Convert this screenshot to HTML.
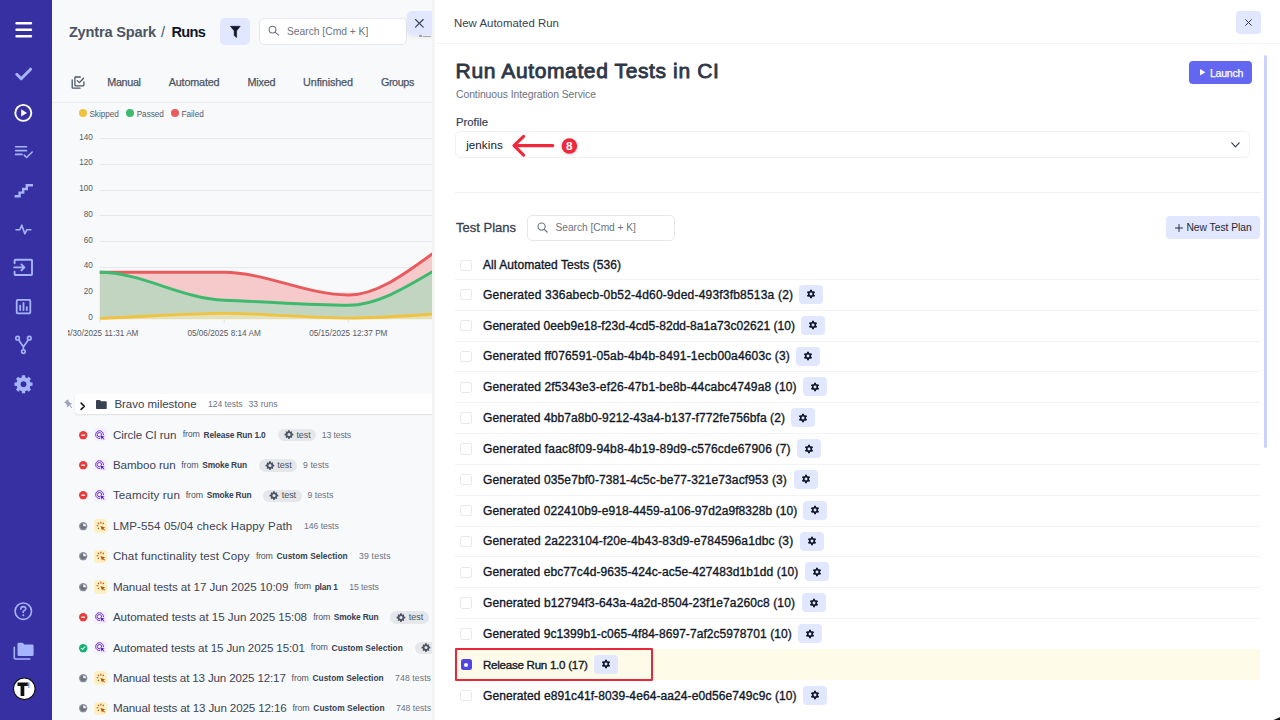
<!DOCTYPE html>
<html><head><meta charset="utf-8">
<style>
*{box-sizing:border-box;margin:0;padding:0}
html,body{width:1280px;height:720px;overflow:hidden;background:#f8f9fb;font-family:"Liberation Sans",sans-serif;position:relative}
.a{position:absolute}
.t{position:absolute;white-space:nowrap;line-height:1}
svg{position:absolute;overflow:visible}
</style></head><body>
<div class="a" style="left:0;top:0;width:432px;height:720px;overflow:hidden">
<div class="t" style="left:68.90px;top:24.96px;font-size:14.6px;color:#4b5563;font-weight:700;letter-spacing:-0.188px;">Zyntra Spark</div>
<div class="t" style="left:161.00px;top:24.96px;font-size:14.6px;color:#4b5563;">/</div>
<div class="t" style="left:171.50px;top:24.96px;font-size:14.6px;color:#111827;font-weight:700;letter-spacing:-0.725px;">Runs</div>
<div class="a" style="left:219.60px;top:18.20px;width:30.80px;height:26.40px;background:#e0e7ff;border-radius:5px"></div>
<svg style="left:229.5px;top:25.5px" width="11" height="12" viewBox="0 0 11 12"><path d="M0.4 0.3H10.2L6.6 4.8V11.5L4.2 9.6V4.8Z" fill="#111827" stroke="#111827" stroke-width="0.6" stroke-linejoin="round"/></svg>
<div class="a" style="left:258.90px;top:18.30px;width:147.80px;height:26.40px;background:#fff;border:1px solid #e6e8eb;border-radius:5px"></div>
<svg style="left:268.3px;top:25.3px" width="12" height="12" viewBox="0 0 12 12"><circle cx="4.5" cy="4.6" r="3.4" fill="none" stroke="#6b7280" stroke-width="1.1"/><path d="M7.4 7.4L10.6 10.2" stroke="#6b7280" stroke-width="1.1" stroke-linecap="round"/></svg>
<div class="t" style="left:287.00px;top:26.50px;font-size:10.3px;color:#6b7280;letter-spacing:-0.017px;">Search [Cmd + K]</div>
<svg style="left:71px;top:76px" width="14" height="14" viewBox="71 76 14 14"><g fill="none" stroke="#4b5563" stroke-width="1.3" stroke-linecap="round" stroke-linejoin="round"><path d="M80.3 77H75.6Q74.9 77 74.9 77.7V85.1Q74.9 85.8 75.6 85.8H83.2Q83.9 85.8 83.9 85.1V82"/><path d="M72.2 80V87.4Q72.2 88.2 73 88.2H80"/><path d="M77.3 80.6L79.4 82.6L83.5 78.3"/></g></svg>
<div class="t" style="left:107.30px;top:77.07px;font-size:10.8px;color:#4b5563;-webkit-text-stroke:0.25px #4b5563;letter-spacing:-0.354px;">Manual</div>
<div class="t" style="left:168.75px;top:77.07px;font-size:10.8px;color:#4b5563;-webkit-text-stroke:0.25px #4b5563;letter-spacing:-0.176px;">Automated</div>
<div class="t" style="left:247.60px;top:77.07px;font-size:10.8px;color:#4b5563;-webkit-text-stroke:0.25px #4b5563;letter-spacing:-0.222px;">Mixed</div>
<div class="t" style="left:303.10px;top:77.07px;font-size:10.8px;color:#4b5563;-webkit-text-stroke:0.25px #4b5563;letter-spacing:-0.133px;">Unfinished</div>
<div class="t" style="left:380.90px;top:77.07px;font-size:10.8px;color:#4b5563;-webkit-text-stroke:0.25px #4b5563;letter-spacing:-0.403px;">Groups</div>
<div class="a" style="left:52.00px;top:102.00px;width:380.00px;height:1.00px;background:#eceef1"></div>
<div class="a" style="left:78.90px;top:108.80px;width:8.40px;height:8.40px;background:#efc33f;border-radius:50%"></div>
<div class="t" style="left:89.40px;top:111.07px;font-size:8.2px;color:#555b63;letter-spacing:-0.019px;">Skipped</div>
<div class="a" style="left:126.10px;top:108.80px;width:8.40px;height:8.40px;background:#3dba6e;border-radius:50%"></div>
<div class="t" style="left:136.70px;top:111.07px;font-size:8.2px;color:#555b63;letter-spacing:-0.025px;">Passed</div>
<div class="a" style="left:171.00px;top:108.80px;width:8.40px;height:8.40px;background:#e95b5d;border-radius:50%"></div>
<div class="t" style="left:181.60px;top:111.07px;font-size:8.2px;color:#555b63;letter-spacing:-0.039px;">Failed</div>
<div class="a" style="left:99.80px;top:138.25px;width:340.00px;height:1.00px;background:#e6e7ea"></div>
<div class="t" style="left:92.80px;top:133.82px;font-size:8.2px;color:#555b63;transform:translateX(-100%);">140</div>
<div class="a" style="left:99.80px;top:163.90px;width:340.00px;height:1.00px;background:#e6e7ea"></div>
<div class="t" style="left:92.80px;top:159.47px;font-size:8.2px;color:#555b63;transform:translateX(-100%);">120</div>
<div class="a" style="left:99.80px;top:189.60px;width:340.00px;height:1.00px;background:#e6e7ea"></div>
<div class="t" style="left:92.80px;top:185.17px;font-size:8.2px;color:#555b63;transform:translateX(-100%);">100</div>
<div class="a" style="left:99.80px;top:215.30px;width:340.00px;height:1.00px;background:#e6e7ea"></div>
<div class="t" style="left:92.80px;top:210.87px;font-size:8.2px;color:#555b63;transform:translateX(-100%);">80</div>
<div class="a" style="left:99.80px;top:241.00px;width:340.00px;height:1.00px;background:#e6e7ea"></div>
<div class="t" style="left:92.80px;top:236.57px;font-size:8.2px;color:#555b63;transform:translateX(-100%);">60</div>
<div class="a" style="left:99.80px;top:266.70px;width:340.00px;height:1.00px;background:#e6e7ea"></div>
<div class="t" style="left:92.80px;top:262.27px;font-size:8.2px;color:#555b63;transform:translateX(-100%);">40</div>
<div class="a" style="left:99.80px;top:292.40px;width:340.00px;height:1.00px;background:#e6e7ea"></div>
<div class="t" style="left:92.80px;top:287.97px;font-size:8.2px;color:#555b63;transform:translateX(-100%);">20</div>
<div class="a" style="left:99.80px;top:318.10px;width:340.00px;height:1.00px;background:#e6e7ea"></div>
<div class="t" style="left:92.80px;top:313.67px;font-size:8.2px;color:#555b63;transform:translateX(-100%);">0</div>
<svg style="left:68px;top:100px;overflow:hidden" width="364" height="250" viewBox="68 100 364 250"><path d="M99.80 272.30C141.20 272.30 182.60 272.30 224.00 272.30C265.43 272.30 306.87 295.00 348.30 295.00C389.70 295.00 431.10 249.65 472.50 227.00L472.50 250.10C431.10 268.48 389.70 305.30 348.30 305.30C306.87 305.30 265.43 301.44 224.00 300.20C182.60 298.96 141.20 272.30 99.80 272.30Z" fill="#f6c9cb"/><path d="M99.80 272.30C141.20 272.30 182.60 298.96 224.00 300.20C265.43 301.44 306.87 305.30 348.30 305.30C389.70 305.30 431.10 268.48 472.50 250.10L472.50 311.60C431.10 313.75 389.70 318.10 348.30 318.10C306.87 318.10 265.43 313.30 224.00 313.30C182.60 313.30 141.20 317.06 99.80 318.30Z" fill="#c2d5c0"/><path d="M99.80 318.30C141.20 317.06 182.60 313.30 224.00 313.30C265.43 313.30 306.87 318.10 348.30 318.10C389.70 318.10 431.10 313.75 472.50 311.60L472.50 319.20C348.27 319.20 224.03 319.20 99.80 319.20Z" fill="#e4e1b8"/><path d="M99.80 272.30C141.20 272.30 182.60 272.30 224.00 272.30C265.43 272.30 306.87 295.00 348.30 295.00C389.70 295.00 431.10 249.65 472.50 227.00" fill="none" stroke="#e85a5c" stroke-width="2.9"/><path d="M99.80 272.30C141.20 272.30 182.60 298.96 224.00 300.20C265.43 301.44 306.87 305.30 348.30 305.30C389.70 305.30 431.10 268.48 472.50 250.10" fill="none" stroke="#3dba6e" stroke-width="2.9"/><path d="M99.80 318.30C141.20 317.06 182.60 313.30 224.00 313.30C265.43 313.30 306.87 318.10 348.30 318.10C389.70 318.10 431.10 313.75 472.50 311.60" fill="none" stroke="#efc33f" stroke-width="2.8"/><rect x="99.3" y="319.2" width="1" height="3.8" fill="#e3e4e7"/><rect x="223.7" y="319.2" width="1" height="3.8" fill="#e3e4e7"/><rect x="347.8" y="319.2" width="1" height="3.8" fill="#e3e4e7"/><g font-family="Liberation Sans" font-size="8.2" fill="#555b63" text-anchor="middle"><text x="99.8" y="335.6">04/30/2025 11:31 AM</text><text x="224.1" y="335.6">05/06/2025 8:14 AM</text><text x="348.3" y="335.6">05/15/2025 12:37 PM</text></g></svg>
<div class="a" style="left:431.80px;top:348.50px;width:3.10px;height:21.80px;background:#e3e5e9;border-radius:2px"></div>
<div class="a" style="left:75.20px;top:394.20px;width:360.00px;height:19.70px;background:#fff;border-radius:3px;box-shadow:0 1px 2px rgba(0,0,0,0.10)"></div>
<svg style="left:64px;top:398.5px" width="10" height="11" viewBox="0 0 10 11"><g transform="rotate(-40 5 5.5)" fill="#9aa3b2"><rect x="2.6" y="0.8" width="4.8" height="1.4" rx="0.4"/><path d="M3.4 2.1H6.6L6.9 5.2L8.2 6.6H1.8L3.1 5.2Z"/><rect x="4.55" y="6.5" width="0.9" height="3.6"/></g></svg>
<svg style="left:79.5px;top:401.5px" width="6" height="8" viewBox="0 0 6 8"><path d="M1.1 1.1L4.4 4.3L1.1 7.4" fill="none" stroke="#111" stroke-width="1.5" stroke-linecap="round" stroke-linejoin="round"/></svg>
<svg style="left:95.9px;top:399.5px" width="11" height="9.2" viewBox="0 0 12 10" preserveAspectRatio="none"><path d="M0 1Q0 0 1 0H4.2L5.5 1.4H11Q11.7 1.4 11.7 2.2V9Q11.7 9.8 11 9.8H0.8Q0 9.8 0 9Z" fill="#374151"/></svg>
<div class="t" style="left:114.40px;top:399.08px;font-size:11.5px;color:#374151;letter-spacing:-0.017px;">Bravo milestone</div>
<div class="t" style="left:207.90px;top:399.93px;font-size:8.6px;color:#6b7280;letter-spacing:-0.022px;">124 tests</div>
<div class="t" style="left:248.50px;top:399.93px;font-size:8.6px;color:#6b7280;letter-spacing:0.074px;">33 runs</div>
<svg style="left:78.67px;top:430.65px" width="8.4" height="8.4" viewBox="0 0 8.4 8.4"><circle cx="4.2" cy="4.2" r="4.15" fill="#ea3b3b"/><rect x="2.3" y="3.6" width="3.8" height="1.25" fill="#fff"/></svg>
<div class="a" style="left:94.20px;top:428.25px;width:12.40px;height:12.80px;background:#f4f0ff;border-radius:3px"></div>
<svg style="left:95.2px;top:429.55px" width="11" height="11" viewBox="0 0 12 12"><g fill="none" stroke="#6d28d9" stroke-width="1.05" stroke-linecap="round"><path d="M9.3 5.2A4.3 4.3 0 1 0 5.2 9.4"/><path d="M7.3 5.4A2.4 2.4 0 1 0 5.1 7.5"/></g><path d="M5.6 5.6L10.6 7.3L8.6 8.1L10.4 9.9L9.8 10.5L8 8.7L7.3 10.6Z" fill="#5b21b6"/></svg>
<div class="t" style="left:112.90px;top:428.65px;font-size:11.6px;color:#3b4453;letter-spacing:-0.074px;">Circle CI run</div>
<div class="t" style="left:182.70px;top:430.31px;font-size:8.8px;color:#4b5563;letter-spacing:-0.125px;">from</div>
<div class="t" style="left:203.60px;top:430.65px;font-size:8.4px;color:#374151;font-weight:700;letter-spacing:-0.149px;">Release Run 1.0</div>
<div class="a" style="left:277.80px;top:428.85px;width:38.20px;height:12.60px;background:#e5e7eb;border-radius:7px"></div>
<svg style="left:283.80px;top:430.25px" width="10" height="10" viewBox="0 0 9 10"><path d="M4.5 0.2L5.4 0.4L5.6 1.5L6.4 1.9L7.4 1.4L8.1 2.1L7.6 3.1L8 3.9L9.1 4.1L9.3 5L9.1 5.9L8 6.1L7.6 6.9L8.1 7.9L7.4 8.6L6.4 8.1L5.6 8.5L5.4 9.6L4.5 9.8L3.6 9.6L3.4 8.5L2.6 8.1L1.6 8.6L0.9 7.9L1.4 6.9L1 6.1L-0.1 5.9L-0.3 5L-0.1 4.1L1 3.9L1.4 3.1L0.9 2.1L1.6 1.4L2.6 1.9L3.4 1.5L3.6 0.4Z" fill="#4b5563" transform="translate(0.3 0) scale(0.92)"/><circle cx="4.5" cy="4.6" r="1.5" fill="#e5e7eb"/></svg>
<div class="t" style="left:296.40px;top:430.55px;font-size:9.0px;color:#4b5563;letter-spacing:-0.027px;">test</div>
<div class="t" style="left:321.80px;top:430.60px;font-size:8.7px;color:#6b7280;letter-spacing:-0.146px;">13 tests</div>
<svg style="left:78.67px;top:461.07px" width="8.4" height="8.4" viewBox="0 0 8.4 8.4"><circle cx="4.2" cy="4.2" r="4.15" fill="#ea3b3b"/><rect x="2.3" y="3.6" width="3.8" height="1.25" fill="#fff"/></svg>
<div class="a" style="left:94.20px;top:458.67px;width:12.40px;height:12.80px;background:#f4f0ff;border-radius:3px"></div>
<svg style="left:95.2px;top:459.97px" width="11" height="11" viewBox="0 0 12 12"><g fill="none" stroke="#6d28d9" stroke-width="1.05" stroke-linecap="round"><path d="M9.3 5.2A4.3 4.3 0 1 0 5.2 9.4"/><path d="M7.3 5.4A2.4 2.4 0 1 0 5.1 7.5"/></g><path d="M5.6 5.6L10.6 7.3L8.6 8.1L10.4 9.9L9.8 10.5L8 8.7L7.3 10.6Z" fill="#5b21b6"/></svg>
<div class="t" style="left:112.90px;top:459.07px;font-size:11.6px;color:#3b4453;letter-spacing:-0.049px;">Bamboo run</div>
<div class="t" style="left:181.30px;top:460.73px;font-size:8.8px;color:#4b5563;letter-spacing:-0.125px;">from</div>
<div class="t" style="left:202.20px;top:461.07px;font-size:8.4px;color:#374151;font-weight:700;letter-spacing:-0.145px;">Smoke Run</div>
<div class="a" style="left:258.70px;top:459.27px;width:38.20px;height:12.60px;background:#e5e7eb;border-radius:7px"></div>
<svg style="left:264.70px;top:460.67px" width="10" height="10" viewBox="0 0 9 10"><path d="M4.5 0.2L5.4 0.4L5.6 1.5L6.4 1.9L7.4 1.4L8.1 2.1L7.6 3.1L8 3.9L9.1 4.1L9.3 5L9.1 5.9L8 6.1L7.6 6.9L8.1 7.9L7.4 8.6L6.4 8.1L5.6 8.5L5.4 9.6L4.5 9.8L3.6 9.6L3.4 8.5L2.6 8.1L1.6 8.6L0.9 7.9L1.4 6.9L1 6.1L-0.1 5.9L-0.3 5L-0.1 4.1L1 3.9L1.4 3.1L0.9 2.1L1.6 1.4L2.6 1.9L3.4 1.5L3.6 0.4Z" fill="#4b5563" transform="translate(0.3 0) scale(0.92)"/><circle cx="4.5" cy="4.6" r="1.5" fill="#e5e7eb"/></svg>
<div class="t" style="left:277.30px;top:460.97px;font-size:9.0px;color:#4b5563;letter-spacing:-0.027px;">test</div>
<div class="t" style="left:303.10px;top:461.02px;font-size:8.7px;color:#6b7280;letter-spacing:0.024px;">9 tests</div>
<svg style="left:78.67px;top:491.49px" width="8.4" height="8.4" viewBox="0 0 8.4 8.4"><circle cx="4.2" cy="4.2" r="4.15" fill="#ea3b3b"/><rect x="2.3" y="3.6" width="3.8" height="1.25" fill="#fff"/></svg>
<div class="a" style="left:94.20px;top:489.09px;width:12.40px;height:12.80px;background:#f4f0ff;border-radius:3px"></div>
<svg style="left:95.2px;top:490.39px" width="11" height="11" viewBox="0 0 12 12"><g fill="none" stroke="#6d28d9" stroke-width="1.05" stroke-linecap="round"><path d="M9.3 5.2A4.3 4.3 0 1 0 5.2 9.4"/><path d="M7.3 5.4A2.4 2.4 0 1 0 5.1 7.5"/></g><path d="M5.6 5.6L10.6 7.3L8.6 8.1L10.4 9.9L9.8 10.5L8 8.7L7.3 10.6Z" fill="#5b21b6"/></svg>
<div class="t" style="left:112.90px;top:489.49px;font-size:11.6px;color:#3b4453;letter-spacing:0.112px;">Teamcity run</div>
<div class="t" style="left:185.80px;top:491.15px;font-size:8.8px;color:#4b5563;letter-spacing:-0.125px;">from</div>
<div class="t" style="left:206.70px;top:491.49px;font-size:8.4px;color:#374151;font-weight:700;letter-spacing:-0.145px;">Smoke Run</div>
<div class="a" style="left:263.10px;top:489.69px;width:38.70px;height:12.60px;background:#e5e7eb;border-radius:7px"></div>
<svg style="left:269.10px;top:491.09px" width="10" height="10" viewBox="0 0 9 10"><path d="M4.5 0.2L5.4 0.4L5.6 1.5L6.4 1.9L7.4 1.4L8.1 2.1L7.6 3.1L8 3.9L9.1 4.1L9.3 5L9.1 5.9L8 6.1L7.6 6.9L8.1 7.9L7.4 8.6L6.4 8.1L5.6 8.5L5.4 9.6L4.5 9.8L3.6 9.6L3.4 8.5L2.6 8.1L1.6 8.6L0.9 7.9L1.4 6.9L1 6.1L-0.1 5.9L-0.3 5L-0.1 4.1L1 3.9L1.4 3.1L0.9 2.1L1.6 1.4L2.6 1.9L3.4 1.5L3.6 0.4Z" fill="#4b5563" transform="translate(0.3 0) scale(0.92)"/><circle cx="4.5" cy="4.6" r="1.5" fill="#e5e7eb"/></svg>
<div class="t" style="left:281.70px;top:491.38px;font-size:9.0px;color:#4b5563;letter-spacing:-0.027px;">test</div>
<div class="t" style="left:307.60px;top:491.44px;font-size:8.7px;color:#6b7280;letter-spacing:0.010px;">9 tests</div>
<svg style="left:78.67px;top:521.91px" width="8.4" height="8.4" viewBox="0 0 8.4 8.4"><circle cx="4.2" cy="4.2" r="4.15" fill="#8c939d"/><circle cx="4.2" cy="4.2" r="2.8" fill="#6a717c"/><path d="M4.2 4.2V1.4A2.8 2.8 0 0 1 7.0 4.2Z" fill="#f4f5f7"/></svg>
<div class="a" style="left:93.60px;top:519.31px;width:13.40px;height:13.60px;background:#fdf0c4;border-radius:3.5px"></div>
<svg style="left:93.6px;top:519.51px" width="12" height="12" viewBox="0 0 12 12"><g stroke="#b45309" stroke-width="1.05" stroke-linecap="round"><path d="M6.9 2.1V3.2"/><path d="M4.1 3.1L4.7 3.8"/><path d="M9.6 3.1L9.0 3.8"/><path d="M3.0 5.8H4.0"/><path d="M4.2 8.6L4.8 8.0"/></g><path d="M6.5 5.9L11.3 7.6L9.4 8.3L11.1 10.0L10.5 10.6L8.8 8.9L8.1 10.8Z" fill="#b45309"/></svg>
<div class="t" style="left:112.90px;top:519.91px;font-size:11.6px;color:#3b4453;letter-spacing:0.094px;">LMP-554 05/04 check Happy Path</div>
<div class="t" style="left:304.00px;top:521.86px;font-size:8.7px;color:#6b7280;letter-spacing:-0.067px;">146 tests</div>
<svg style="left:78.67px;top:552.33px" width="8.4" height="8.4" viewBox="0 0 8.4 8.4"><circle cx="4.2" cy="4.2" r="4.15" fill="#8c939d"/><circle cx="4.2" cy="4.2" r="2.8" fill="#6a717c"/><path d="M4.2 4.2V1.4A2.8 2.8 0 0 1 7.0 4.2Z" fill="#f4f5f7"/></svg>
<div class="a" style="left:93.60px;top:549.73px;width:13.40px;height:13.60px;background:#fdf0c4;border-radius:3.5px"></div>
<svg style="left:93.6px;top:549.93px" width="12" height="12" viewBox="0 0 12 12"><g stroke="#b45309" stroke-width="1.05" stroke-linecap="round"><path d="M6.9 2.1V3.2"/><path d="M4.1 3.1L4.7 3.8"/><path d="M9.6 3.1L9.0 3.8"/><path d="M3.0 5.8H4.0"/><path d="M4.2 8.6L4.8 8.0"/></g><path d="M6.5 5.9L11.3 7.6L9.4 8.3L11.1 10.0L10.5 10.6L8.8 8.9L8.1 10.8Z" fill="#b45309"/></svg>
<div class="t" style="left:112.90px;top:550.33px;font-size:11.6px;color:#3b4453;letter-spacing:0.079px;">Chat functinality test Copy</div>
<div class="t" style="left:256.00px;top:551.99px;font-size:8.8px;color:#4b5563;letter-spacing:-0.250px;">from</div>
<div class="t" style="left:276.40px;top:552.33px;font-size:8.4px;color:#374151;font-weight:700;letter-spacing:0.041px;">Custom Selection</div>
<div class="t" style="left:359.10px;top:552.28px;font-size:8.7px;color:#6b7280;letter-spacing:0.142px;">39 tests</div>
<svg style="left:78.67px;top:582.75px" width="8.4" height="8.4" viewBox="0 0 8.4 8.4"><circle cx="4.2" cy="4.2" r="4.15" fill="#8c939d"/><circle cx="4.2" cy="4.2" r="2.8" fill="#6a717c"/><path d="M4.2 4.2V1.4A2.8 2.8 0 0 1 7.0 4.2Z" fill="#f4f5f7"/></svg>
<div class="a" style="left:93.60px;top:580.15px;width:13.40px;height:13.60px;background:#fdf0c4;border-radius:3.5px"></div>
<svg style="left:93.6px;top:580.35px" width="12" height="12" viewBox="0 0 12 12"><g stroke="#b45309" stroke-width="1.05" stroke-linecap="round"><path d="M6.9 2.1V3.2"/><path d="M4.1 3.1L4.7 3.8"/><path d="M9.6 3.1L9.0 3.8"/><path d="M3.0 5.8H4.0"/><path d="M4.2 8.6L4.8 8.0"/></g><path d="M6.5 5.9L11.3 7.6L9.4 8.3L11.1 10.0L10.5 10.6L8.8 8.9L8.1 10.8Z" fill="#b45309"/></svg>
<div class="t" style="left:112.90px;top:580.75px;font-size:11.6px;color:#3b4453;letter-spacing:-0.076px;">Manual tests at 17 Jun 2025 10:09</div>
<div class="t" style="left:294.20px;top:582.41px;font-size:8.8px;color:#4b5563;letter-spacing:-0.225px;">from</div>
<div class="t" style="left:314.70px;top:582.75px;font-size:8.4px;color:#374151;font-weight:700;letter-spacing:-0.196px;">plan 1</div>
<div class="t" style="left:349.30px;top:582.70px;font-size:8.7px;color:#6b7280;letter-spacing:-0.133px;">15 tests</div>
<svg style="left:78.67px;top:613.17px" width="8.4" height="8.4" viewBox="0 0 8.4 8.4"><circle cx="4.2" cy="4.2" r="4.15" fill="#ea3b3b"/><rect x="2.3" y="3.6" width="3.8" height="1.25" fill="#fff"/></svg>
<div class="a" style="left:94.20px;top:610.77px;width:12.40px;height:12.80px;background:#f4f0ff;border-radius:3px"></div>
<svg style="left:95.2px;top:612.07px" width="11" height="11" viewBox="0 0 12 12"><g fill="none" stroke="#6d28d9" stroke-width="1.05" stroke-linecap="round"><path d="M9.3 5.2A4.3 4.3 0 1 0 5.2 9.4"/><path d="M7.3 5.4A2.4 2.4 0 1 0 5.1 7.5"/></g><path d="M5.6 5.6L10.6 7.3L8.6 8.1L10.4 9.9L9.8 10.5L8 8.7L7.3 10.6Z" fill="#5b21b6"/></svg>
<div class="t" style="left:112.90px;top:611.17px;font-size:11.6px;color:#3b4453;letter-spacing:-0.051px;">Automated tests at 15 Jun 2025 15:08</div>
<div class="t" style="left:313.30px;top:612.83px;font-size:8.8px;color:#4b5563;letter-spacing:-0.225px;">from</div>
<div class="t" style="left:333.80px;top:613.17px;font-size:8.4px;color:#374151;font-weight:700;letter-spacing:-0.145px;">Smoke Run</div>
<div class="a" style="left:390.20px;top:611.37px;width:38.70px;height:12.60px;background:#e5e7eb;border-radius:7px"></div>
<svg style="left:396.20px;top:612.77px" width="10" height="10" viewBox="0 0 9 10"><path d="M4.5 0.2L5.4 0.4L5.6 1.5L6.4 1.9L7.4 1.4L8.1 2.1L7.6 3.1L8 3.9L9.1 4.1L9.3 5L9.1 5.9L8 6.1L7.6 6.9L8.1 7.9L7.4 8.6L6.4 8.1L5.6 8.5L5.4 9.6L4.5 9.8L3.6 9.6L3.4 8.5L2.6 8.1L1.6 8.6L0.9 7.9L1.4 6.9L1 6.1L-0.1 5.9L-0.3 5L-0.1 4.1L1 3.9L1.4 3.1L0.9 2.1L1.6 1.4L2.6 1.9L3.4 1.5L3.6 0.4Z" fill="#4b5563" transform="translate(0.3 0) scale(0.92)"/><circle cx="4.5" cy="4.6" r="1.5" fill="#e5e7eb"/></svg>
<div class="t" style="left:408.80px;top:613.07px;font-size:9.0px;color:#4b5563;letter-spacing:-0.027px;">test</div>
<svg style="left:78.67px;top:643.59px" width="8.4" height="8.4" viewBox="0 0 8.4 8.4"><circle cx="4.2" cy="4.2" r="4.15" fill="#10b06f"/><path d="M2.3 4.4L3.5 5.4L6 2.9" fill="none" stroke="#fff" stroke-width="1.1" stroke-linecap="round" stroke-linejoin="round"/></svg>
<div class="a" style="left:94.20px;top:641.19px;width:12.40px;height:12.80px;background:#f4f0ff;border-radius:3px"></div>
<svg style="left:95.2px;top:642.49px" width="11" height="11" viewBox="0 0 12 12"><g fill="none" stroke="#6d28d9" stroke-width="1.05" stroke-linecap="round"><path d="M9.3 5.2A4.3 4.3 0 1 0 5.2 9.4"/><path d="M7.3 5.4A2.4 2.4 0 1 0 5.1 7.5"/></g><path d="M5.6 5.6L10.6 7.3L8.6 8.1L10.4 9.9L9.8 10.5L8 8.7L7.3 10.6Z" fill="#5b21b6"/></svg>
<div class="t" style="left:112.90px;top:641.59px;font-size:11.6px;color:#3b4453;letter-spacing:-0.113px;">Automated tests at 15 Jun 2025 15:01</div>
<div class="t" style="left:310.70px;top:643.25px;font-size:8.8px;color:#4b5563;letter-spacing:-0.125px;">from</div>
<div class="t" style="left:331.60px;top:643.59px;font-size:8.4px;color:#374151;font-weight:700;letter-spacing:0.035px;">Custom Selection</div>
<div class="a" style="left:414.50px;top:641.79px;width:38.50px;height:12.60px;background:#e5e7eb;border-radius:7px"></div>
<svg style="left:420.50px;top:643.19px" width="10" height="10" viewBox="0 0 9 10"><path d="M4.5 0.2L5.4 0.4L5.6 1.5L6.4 1.9L7.4 1.4L8.1 2.1L7.6 3.1L8 3.9L9.1 4.1L9.3 5L9.1 5.9L8 6.1L7.6 6.9L8.1 7.9L7.4 8.6L6.4 8.1L5.6 8.5L5.4 9.6L4.5 9.8L3.6 9.6L3.4 8.5L2.6 8.1L1.6 8.6L0.9 7.9L1.4 6.9L1 6.1L-0.1 5.9L-0.3 5L-0.1 4.1L1 3.9L1.4 3.1L0.9 2.1L1.6 1.4L2.6 1.9L3.4 1.5L3.6 0.4Z" fill="#4b5563" transform="translate(0.3 0) scale(0.92)"/><circle cx="4.5" cy="4.6" r="1.5" fill="#e5e7eb"/></svg>
<div class="t" style="left:433.10px;top:643.49px;font-size:9.0px;color:#4b5563;letter-spacing:-0.027px;">test</div>
<svg style="left:78.67px;top:674.01px" width="8.4" height="8.4" viewBox="0 0 8.4 8.4"><circle cx="4.2" cy="4.2" r="4.15" fill="#8c939d"/><circle cx="4.2" cy="4.2" r="2.8" fill="#6a717c"/><path d="M4.2 4.2V1.4A2.8 2.8 0 0 1 7.0 4.2Z" fill="#f4f5f7"/></svg>
<div class="a" style="left:93.60px;top:671.41px;width:13.40px;height:13.60px;background:#fdf0c4;border-radius:3.5px"></div>
<svg style="left:93.6px;top:671.61px" width="12" height="12" viewBox="0 0 12 12"><g stroke="#b45309" stroke-width="1.05" stroke-linecap="round"><path d="M6.9 2.1V3.2"/><path d="M4.1 3.1L4.7 3.8"/><path d="M9.6 3.1L9.0 3.8"/><path d="M3.0 5.8H4.0"/><path d="M4.2 8.6L4.8 8.0"/></g><path d="M6.5 5.9L11.3 7.6L9.4 8.3L11.1 10.0L10.5 10.6L8.8 8.9L8.1 10.8Z" fill="#b45309"/></svg>
<div class="t" style="left:112.90px;top:672.01px;font-size:11.6px;color:#3b4453;letter-spacing:-0.154px;">Manual tests at 13 Jun 2025 12:17</div>
<div class="t" style="left:291.60px;top:673.67px;font-size:8.8px;color:#4b5563;letter-spacing:-0.150px;">from</div>
<div class="t" style="left:312.40px;top:674.01px;font-size:8.4px;color:#374151;font-weight:700;letter-spacing:0.041px;">Custom Selection</div>
<div class="t" style="left:395.10px;top:673.96px;font-size:8.7px;color:#6b7280;letter-spacing:0.077px;">748 tests</div>
<svg style="left:78.67px;top:704.43px" width="8.4" height="8.4" viewBox="0 0 8.4 8.4"><circle cx="4.2" cy="4.2" r="4.15" fill="#8c939d"/><circle cx="4.2" cy="4.2" r="2.8" fill="#6a717c"/><path d="M4.2 4.2V1.4A2.8 2.8 0 0 1 7.0 4.2Z" fill="#f4f5f7"/></svg>
<div class="a" style="left:93.60px;top:701.83px;width:13.40px;height:13.60px;background:#fdf0c4;border-radius:3.5px"></div>
<svg style="left:93.6px;top:702.03px" width="12" height="12" viewBox="0 0 12 12"><g stroke="#b45309" stroke-width="1.05" stroke-linecap="round"><path d="M6.9 2.1V3.2"/><path d="M4.1 3.1L4.7 3.8"/><path d="M9.6 3.1L9.0 3.8"/><path d="M3.0 5.8H4.0"/><path d="M4.2 8.6L4.8 8.0"/></g><path d="M6.5 5.9L11.3 7.6L9.4 8.3L11.1 10.0L10.5 10.6L8.8 8.9L8.1 10.8Z" fill="#b45309"/></svg>
<div class="t" style="left:112.90px;top:702.43px;font-size:11.6px;color:#3b4453;letter-spacing:-0.127px;">Manual tests at 13 Jun 2025 12:16</div>
<div class="t" style="left:292.40px;top:704.09px;font-size:8.8px;color:#4b5563;letter-spacing:-0.125px;">from</div>
<div class="t" style="left:313.30px;top:704.43px;font-size:8.4px;color:#374151;font-weight:700;letter-spacing:0.041px;">Custom Selection</div>
<div class="t" style="left:396.00px;top:704.38px;font-size:8.7px;color:#6b7280;letter-spacing:-0.023px;">748 tests</div>
</div>
<div class="a" style="left:407.00px;top:10.50px;width:25.00px;height:24.50px;background:#e0e7ff;border-radius:5px 0 0 5px;box-shadow:0 3px 4px rgba(0,0,0,0.06)"></div>
<svg style="left:414.7px;top:18.8px" width="9" height="9" viewBox="0 0 9 9"><path d="M0.5 0.5L8.2 8.2M8.2 0.5L0.5 8.2" stroke="#374151" stroke-width="1.15" stroke-linecap="round"/></svg>
<div class="a" style="left:418.50px;top:35.30px;width:3.00px;height:1.60px;background:#6b7280;opacity:0.6"></div>
<div class="a" style="left:422.50px;top:35.80px;width:8.00px;height:1.40px;background:#6b7280;opacity:0.55"></div>
<div class="a" style="left:432.00px;top:0.00px;width:3.00px;height:720.00px;background:linear-gradient(90deg,#f1f2f4,#f6f6f7)"></div>
<div class="a" style="left:434.50px;top:0.00px;width:845.50px;height:720.00px;background:#fff"></div>
<div class="t" style="left:454.00px;top:18.07px;font-size:11.4px;color:#374151;letter-spacing:0.026px;">New Automated Run</div>
<div class="a" style="left:434.50px;top:43.00px;width:845.50px;height:1.00px;background:#f3f4f6"></div>
<div class="a" style="left:1236.00px;top:11.40px;width:25.00px;height:23.00px;background:#e0e7ff;border-radius:4px"></div>
<svg style="left:1245px;top:19.4px" width="7" height="7" viewBox="0 0 7 7"><path d="M0.6 0.6L6.4 6.4M6.4 0.6L0.6 6.4" stroke="#374151" stroke-width="1" stroke-linecap="round"/></svg>
<div class="t" style="left:455.60px;top:60.35px;font-size:21px;color:#2d3748;-webkit-text-stroke:0.85px #2d3748;letter-spacing:0.622px;">Run Automated Tests in CI</div>
<div class="t" style="left:456.00px;top:89.71px;font-size:10.4px;color:#6b7280;letter-spacing:-0.074px;">Continuous Integration Service</div>
<div class="a" style="left:1189.00px;top:60.80px;width:63.20px;height:23.20px;background:#6366f1;border-radius:4px"></div>
<svg style="left:1199.8px;top:69.2px" width="5.4" height="6.6" viewBox="0 0 6 8" preserveAspectRatio="none"><path d="M0 0L6 4L0 8Z" fill="#fff"/></svg>
<div class="t" style="left:1210.00px;top:68.04px;font-size:10.6px;color:#fff;-webkit-text-stroke:0.25px #fff;letter-spacing:-0.296px;">Launch</div>
<div class="t" style="left:456.00px;top:116.65px;font-size:11.3px;color:#374151;-webkit-text-stroke:0.2px #374151;letter-spacing:-0.004px;">Profile</div>
<div class="a" style="left:455.00px;top:130.50px;width:795.00px;height:27.80px;border:1px solid #f0f1f3;border-radius:5px;background:#fff"></div>
<div class="t" style="left:466.20px;top:138.80px;font-size:11.6px;color:#111827;letter-spacing:0.070px;">jenkins</div>
<svg style="left:1230.8px;top:141.7px" width="9" height="6" viewBox="0 0 9 6"><path d="M0.8 0.8L4.5 4.8L8.2 0.8" fill="none" stroke="#374151" stroke-width="1.2" stroke-linecap="round" stroke-linejoin="round"/></svg>
<svg style="left:510px;top:133px" width="70" height="26" viewBox="0 0 70 26"><g fill="none" stroke="#f0283c" stroke-width="3.1" stroke-linecap="round" stroke-linejoin="round"><path d="M4.5 12.6H42.8"/><path d="M13.6 3.4L4 12.6L13.6 22.1"/></g><circle cx="59.4" cy="13.0" r="7.75" fill="#f0283c" style="filter:drop-shadow(0 1px 1.5px rgba(0,0,0,0.18))"/><text x="59.4" y="17.2" text-anchor="middle" font-family="Liberation Sans" font-weight="700" font-size="11.8" fill="#fff">8</text></svg>
<div class="a" style="left:455.00px;top:192.00px;width:806.00px;height:1.00px;background:#f1f2f4"></div>
<div class="t" style="left:456.00px;top:220.62px;font-size:13px;color:#374151;-webkit-text-stroke:0.3px #374151;letter-spacing:0.003px;">Test Plans</div>
<div class="a" style="left:527.40px;top:214.50px;width:148.10px;height:26.00px;border:1px solid #e5e7eb;border-radius:5px;background:#fff"></div>
<svg style="left:536.5px;top:222px" width="11" height="11" viewBox="0 0 11 11"><circle cx="4.6" cy="4.6" r="3.6" fill="none" stroke="#6b7280" stroke-width="1.1"/><path d="M7.3 7.3L10 10" stroke="#6b7280" stroke-width="1.2" stroke-linecap="round"/></svg>
<div class="t" style="left:555.50px;top:222.78px;font-size:10.2px;color:#6b7280;letter-spacing:-0.018px;">Search [Cmd + K]</div>
<div class="a" style="left:1165.50px;top:216.00px;width:94.80px;height:23.00px;background:#e0e7ff;border-radius:4px"></div>
<svg style="left:1175px;top:223.5px" width="8" height="8" viewBox="0 0 8 8"><path d="M4 0.5V7.5M0.5 4H7.5" stroke="#1f2937" stroke-width="0.95" stroke-linecap="round"/></svg>
<div class="t" style="left:1186.40px;top:222.50px;font-size:10.3px;color:#1f2937;letter-spacing:-0.027px;">New Test Plan</div>
<div class="a" style="left:1263.50px;top:55.00px;width:3.20px;height:393.00px;background:#c9d3fd;border-radius:2px"></div>
<div class="a" style="left:455.00px;top:279.00px;width:805.00px;height:1.00px;background:#f2f3f5"></div>
<div class="a" style="left:460.40px;top:259.67px;width:11.40px;height:11.40px;border:1px solid #e5e7eb;border-radius:2.5px;background:#fff"></div>
<div class="t" style="left:483.00px;top:259.33px;font-size:12px;color:#111827;-webkit-text-stroke:0.35px #111827;letter-spacing:0.059px;">All Automated Tests (536)</div>
<div class="a" style="left:455.00px;top:309.73px;width:805.00px;height:1.00px;background:#f2f3f5"></div>
<div class="a" style="left:460.40px;top:289.10px;width:11.40px;height:11.40px;border:1px solid #e5e7eb;border-radius:2.5px;background:#fff"></div>
<div class="t" style="left:483.00px;top:288.76px;font-size:12px;color:#111827;-webkit-text-stroke:0.35px #111827;letter-spacing:0.201px;">Generated 336abecb-0b52-4d60-9ded-493f3fb8513a (2)</div>
<div class="a" style="left:799.30px;top:284.90px;width:24.00px;height:19.00px;background:#e0e7ff;border-radius:4px"></div>
<svg style="left:807.30px;top:290.40px" width="8" height="8" viewBox="0 0 8 8"><path d="M3.01 1.27L3.04 -0.14L4.96 -0.14L4.99 1.27L5.86 1.78L7.11 1.10L8.06 2.76L6.86 3.50L6.86 4.50L8.06 5.24L7.11 6.90L5.86 6.22L4.99 6.73L4.96 8.14L3.04 8.14L3.01 6.73L2.14 6.22L0.89 6.90L-0.06 5.24L1.14 4.50L1.14 3.50L-0.06 2.76L0.89 1.10L2.14 1.78Z" fill="#0f172a"/><circle cx="4" cy="4" r="2.95" fill="#0f172a"/><circle cx="4" cy="4" r="1.45" fill="#e0e7ff"/></svg>
<div class="a" style="left:455.00px;top:340.56px;width:805.00px;height:1.00px;background:#f2f3f5"></div>
<div class="a" style="left:460.40px;top:319.93px;width:11.40px;height:11.40px;border:1px solid #e5e7eb;border-radius:2.5px;background:#fff"></div>
<div class="t" style="left:483.00px;top:319.59px;font-size:12px;color:#111827;-webkit-text-stroke:0.35px #111827;letter-spacing:0.048px;">Generated 0eeb9e18-f23d-4cd5-82dd-8a1a73c02621 (10)</div>
<div class="a" style="left:801.00px;top:315.73px;width:24.00px;height:19.00px;background:#e0e7ff;border-radius:4px"></div>
<svg style="left:809.00px;top:321.23px" width="8" height="8" viewBox="0 0 8 8"><path d="M3.01 1.27L3.04 -0.14L4.96 -0.14L4.99 1.27L5.86 1.78L7.11 1.10L8.06 2.76L6.86 3.50L6.86 4.50L8.06 5.24L7.11 6.90L5.86 6.22L4.99 6.73L4.96 8.14L3.04 8.14L3.01 6.73L2.14 6.22L0.89 6.90L-0.06 5.24L1.14 4.50L1.14 3.50L-0.06 2.76L0.89 1.10L2.14 1.78Z" fill="#0f172a"/><circle cx="4" cy="4" r="2.95" fill="#0f172a"/><circle cx="4" cy="4" r="1.45" fill="#e0e7ff"/></svg>
<div class="a" style="left:455.00px;top:371.39px;width:805.00px;height:1.00px;background:#f2f3f5"></div>
<div class="a" style="left:460.40px;top:350.76px;width:11.40px;height:11.40px;border:1px solid #e5e7eb;border-radius:2.5px;background:#fff"></div>
<div class="t" style="left:483.00px;top:350.42px;font-size:12px;color:#111827;-webkit-text-stroke:0.35px #111827;letter-spacing:0.153px;">Generated ff076591-05ab-4b4b-8491-1ecb00a4603c (3)</div>
<div class="a" style="left:796.00px;top:346.56px;width:24.00px;height:19.00px;background:#e0e7ff;border-radius:4px"></div>
<svg style="left:804.00px;top:352.06px" width="8" height="8" viewBox="0 0 8 8"><path d="M3.01 1.27L3.04 -0.14L4.96 -0.14L4.99 1.27L5.86 1.78L7.11 1.10L8.06 2.76L6.86 3.50L6.86 4.50L8.06 5.24L7.11 6.90L5.86 6.22L4.99 6.73L4.96 8.14L3.04 8.14L3.01 6.73L2.14 6.22L0.89 6.90L-0.06 5.24L1.14 4.50L1.14 3.50L-0.06 2.76L0.89 1.10L2.14 1.78Z" fill="#0f172a"/><circle cx="4" cy="4" r="2.95" fill="#0f172a"/><circle cx="4" cy="4" r="1.45" fill="#e0e7ff"/></svg>
<div class="a" style="left:455.00px;top:402.22px;width:805.00px;height:1.00px;background:#f2f3f5"></div>
<div class="a" style="left:460.40px;top:381.59px;width:11.40px;height:11.40px;border:1px solid #e5e7eb;border-radius:2.5px;background:#fff"></div>
<div class="t" style="left:483.00px;top:381.25px;font-size:12px;color:#111827;-webkit-text-stroke:0.35px #111827;letter-spacing:0.146px;">Generated 2f5343e3-ef26-47b1-be8b-44cabc4749a8 (10)</div>
<div class="a" style="left:802.70px;top:377.39px;width:24.00px;height:19.00px;background:#e0e7ff;border-radius:4px"></div>
<svg style="left:810.70px;top:382.89px" width="8" height="8" viewBox="0 0 8 8"><path d="M3.01 1.27L3.04 -0.14L4.96 -0.14L4.99 1.27L5.86 1.78L7.11 1.10L8.06 2.76L6.86 3.50L6.86 4.50L8.06 5.24L7.11 6.90L5.86 6.22L4.99 6.73L4.96 8.14L3.04 8.14L3.01 6.73L2.14 6.22L0.89 6.90L-0.06 5.24L1.14 4.50L1.14 3.50L-0.06 2.76L0.89 1.10L2.14 1.78Z" fill="#0f172a"/><circle cx="4" cy="4" r="2.95" fill="#0f172a"/><circle cx="4" cy="4" r="1.45" fill="#e0e7ff"/></svg>
<div class="a" style="left:455.00px;top:433.05px;width:805.00px;height:1.00px;background:#f2f3f5"></div>
<div class="a" style="left:460.40px;top:412.42px;width:11.40px;height:11.40px;border:1px solid #e5e7eb;border-radius:2.5px;background:#fff"></div>
<div class="t" style="left:483.00px;top:412.08px;font-size:12px;color:#111827;-webkit-text-stroke:0.35px #111827;letter-spacing:0.089px;">Generated 4bb7a8b0-9212-43a4-b137-f772fe756bfa (2)</div>
<div class="a" style="left:791.00px;top:408.22px;width:24.00px;height:19.00px;background:#e0e7ff;border-radius:4px"></div>
<svg style="left:799.00px;top:413.72px" width="8" height="8" viewBox="0 0 8 8"><path d="M3.01 1.27L3.04 -0.14L4.96 -0.14L4.99 1.27L5.86 1.78L7.11 1.10L8.06 2.76L6.86 3.50L6.86 4.50L8.06 5.24L7.11 6.90L5.86 6.22L4.99 6.73L4.96 8.14L3.04 8.14L3.01 6.73L2.14 6.22L0.89 6.90L-0.06 5.24L1.14 4.50L1.14 3.50L-0.06 2.76L0.89 1.10L2.14 1.78Z" fill="#0f172a"/><circle cx="4" cy="4" r="2.95" fill="#0f172a"/><circle cx="4" cy="4" r="1.45" fill="#e0e7ff"/></svg>
<div class="a" style="left:455.00px;top:463.88px;width:805.00px;height:1.00px;background:#f2f3f5"></div>
<div class="a" style="left:460.40px;top:443.25px;width:11.40px;height:11.40px;border:1px solid #e5e7eb;border-radius:2.5px;background:#fff"></div>
<div class="t" style="left:483.00px;top:442.91px;font-size:12px;color:#111827;-webkit-text-stroke:0.35px #111827;letter-spacing:0.176px;">Generated faac8f09-94b8-4b19-89d9-c576cde67906 (7)</div>
<div class="a" style="left:797.00px;top:439.05px;width:24.00px;height:19.00px;background:#e0e7ff;border-radius:4px"></div>
<svg style="left:805.00px;top:444.55px" width="8" height="8" viewBox="0 0 8 8"><path d="M3.01 1.27L3.04 -0.14L4.96 -0.14L4.99 1.27L5.86 1.78L7.11 1.10L8.06 2.76L6.86 3.50L6.86 4.50L8.06 5.24L7.11 6.90L5.86 6.22L4.99 6.73L4.96 8.14L3.04 8.14L3.01 6.73L2.14 6.22L0.89 6.90L-0.06 5.24L1.14 4.50L1.14 3.50L-0.06 2.76L0.89 1.10L2.14 1.78Z" fill="#0f172a"/><circle cx="4" cy="4" r="2.95" fill="#0f172a"/><circle cx="4" cy="4" r="1.45" fill="#e0e7ff"/></svg>
<div class="a" style="left:455.00px;top:494.71px;width:805.00px;height:1.00px;background:#f2f3f5"></div>
<div class="a" style="left:460.40px;top:474.08px;width:11.40px;height:11.40px;border:1px solid #e5e7eb;border-radius:2.5px;background:#fff"></div>
<div class="t" style="left:483.00px;top:473.74px;font-size:12px;color:#111827;-webkit-text-stroke:0.35px #111827;letter-spacing:0.100px;">Generated 035e7bf0-7381-4c5c-be77-321e73acf953 (3)</div>
<div class="a" style="left:793.50px;top:469.88px;width:24.00px;height:19.00px;background:#e0e7ff;border-radius:4px"></div>
<svg style="left:801.50px;top:475.38px" width="8" height="8" viewBox="0 0 8 8"><path d="M3.01 1.27L3.04 -0.14L4.96 -0.14L4.99 1.27L5.86 1.78L7.11 1.10L8.06 2.76L6.86 3.50L6.86 4.50L8.06 5.24L7.11 6.90L5.86 6.22L4.99 6.73L4.96 8.14L3.04 8.14L3.01 6.73L2.14 6.22L0.89 6.90L-0.06 5.24L1.14 4.50L1.14 3.50L-0.06 2.76L0.89 1.10L2.14 1.78Z" fill="#0f172a"/><circle cx="4" cy="4" r="2.95" fill="#0f172a"/><circle cx="4" cy="4" r="1.45" fill="#e0e7ff"/></svg>
<div class="a" style="left:455.00px;top:525.54px;width:805.00px;height:1.00px;background:#f2f3f5"></div>
<div class="a" style="left:460.40px;top:504.91px;width:11.40px;height:11.40px;border:1px solid #e5e7eb;border-radius:2.5px;background:#fff"></div>
<div class="t" style="left:483.00px;top:504.57px;font-size:12px;color:#111827;-webkit-text-stroke:0.35px #111827;letter-spacing:0.066px;">Generated 022410b9-e918-4459-a106-97d2a9f8328b (10)</div>
<div class="a" style="left:803.30px;top:500.71px;width:24.00px;height:19.00px;background:#e0e7ff;border-radius:4px"></div>
<svg style="left:811.30px;top:506.21px" width="8" height="8" viewBox="0 0 8 8"><path d="M3.01 1.27L3.04 -0.14L4.96 -0.14L4.99 1.27L5.86 1.78L7.11 1.10L8.06 2.76L6.86 3.50L6.86 4.50L8.06 5.24L7.11 6.90L5.86 6.22L4.99 6.73L4.96 8.14L3.04 8.14L3.01 6.73L2.14 6.22L0.89 6.90L-0.06 5.24L1.14 4.50L1.14 3.50L-0.06 2.76L0.89 1.10L2.14 1.78Z" fill="#0f172a"/><circle cx="4" cy="4" r="2.95" fill="#0f172a"/><circle cx="4" cy="4" r="1.45" fill="#e0e7ff"/></svg>
<div class="a" style="left:455.00px;top:556.37px;width:805.00px;height:1.00px;background:#f2f3f5"></div>
<div class="a" style="left:460.40px;top:535.74px;width:11.40px;height:11.40px;border:1px solid #e5e7eb;border-radius:2.5px;background:#fff"></div>
<div class="t" style="left:483.00px;top:535.40px;font-size:12px;color:#111827;-webkit-text-stroke:0.35px #111827;letter-spacing:0.134px;">Generated 2a223104-f20e-4b43-83d9-e784596a1dbc (3)</div>
<div class="a" style="left:800.00px;top:531.54px;width:24.00px;height:19.00px;background:#e0e7ff;border-radius:4px"></div>
<svg style="left:808.00px;top:537.04px" width="8" height="8" viewBox="0 0 8 8"><path d="M3.01 1.27L3.04 -0.14L4.96 -0.14L4.99 1.27L5.86 1.78L7.11 1.10L8.06 2.76L6.86 3.50L6.86 4.50L8.06 5.24L7.11 6.90L5.86 6.22L4.99 6.73L4.96 8.14L3.04 8.14L3.01 6.73L2.14 6.22L0.89 6.90L-0.06 5.24L1.14 4.50L1.14 3.50L-0.06 2.76L0.89 1.10L2.14 1.78Z" fill="#0f172a"/><circle cx="4" cy="4" r="2.95" fill="#0f172a"/><circle cx="4" cy="4" r="1.45" fill="#e0e7ff"/></svg>
<div class="a" style="left:455.00px;top:587.20px;width:805.00px;height:1.00px;background:#f2f3f5"></div>
<div class="a" style="left:460.40px;top:566.57px;width:11.40px;height:11.40px;border:1px solid #e5e7eb;border-radius:2.5px;background:#fff"></div>
<div class="t" style="left:483.00px;top:566.23px;font-size:12px;color:#111827;-webkit-text-stroke:0.35px #111827;letter-spacing:0.073px;">Generated ebc77c4d-9635-424c-ac5e-427483d1b1dd (10)</div>
<div class="a" style="left:805.00px;top:562.37px;width:24.00px;height:19.00px;background:#e0e7ff;border-radius:4px"></div>
<svg style="left:813.00px;top:567.87px" width="8" height="8" viewBox="0 0 8 8"><path d="M3.01 1.27L3.04 -0.14L4.96 -0.14L4.99 1.27L5.86 1.78L7.11 1.10L8.06 2.76L6.86 3.50L6.86 4.50L8.06 5.24L7.11 6.90L5.86 6.22L4.99 6.73L4.96 8.14L3.04 8.14L3.01 6.73L2.14 6.22L0.89 6.90L-0.06 5.24L1.14 4.50L1.14 3.50L-0.06 2.76L0.89 1.10L2.14 1.78Z" fill="#0f172a"/><circle cx="4" cy="4" r="2.95" fill="#0f172a"/><circle cx="4" cy="4" r="1.45" fill="#e0e7ff"/></svg>
<div class="a" style="left:455.00px;top:618.03px;width:805.00px;height:1.00px;background:#f2f3f5"></div>
<div class="a" style="left:460.40px;top:597.40px;width:11.40px;height:11.40px;border:1px solid #e5e7eb;border-radius:2.5px;background:#fff"></div>
<div class="t" style="left:483.00px;top:597.06px;font-size:12px;color:#111827;-webkit-text-stroke:0.35px #111827;letter-spacing:0.100px;">Generated b12794f3-643a-4a2d-8504-23f1e7a260c8 (10)</div>
<div class="a" style="left:801.70px;top:593.20px;width:24.00px;height:19.00px;background:#e0e7ff;border-radius:4px"></div>
<svg style="left:809.70px;top:598.70px" width="8" height="8" viewBox="0 0 8 8"><path d="M3.01 1.27L3.04 -0.14L4.96 -0.14L4.99 1.27L5.86 1.78L7.11 1.10L8.06 2.76L6.86 3.50L6.86 4.50L8.06 5.24L7.11 6.90L5.86 6.22L4.99 6.73L4.96 8.14L3.04 8.14L3.01 6.73L2.14 6.22L0.89 6.90L-0.06 5.24L1.14 4.50L1.14 3.50L-0.06 2.76L0.89 1.10L2.14 1.78Z" fill="#0f172a"/><circle cx="4" cy="4" r="2.95" fill="#0f172a"/><circle cx="4" cy="4" r="1.45" fill="#e0e7ff"/></svg>
<div class="a" style="left:460.40px;top:628.23px;width:11.40px;height:11.40px;border:1px solid #e5e7eb;border-radius:2.5px;background:#fff"></div>
<div class="t" style="left:483.00px;top:627.89px;font-size:12px;color:#111827;-webkit-text-stroke:0.35px #111827;letter-spacing:0.062px;">Generated 9c1399b1-c065-4f84-8697-7af2c5978701 (10)</div>
<div class="a" style="left:798.30px;top:624.03px;width:24.00px;height:19.00px;background:#e0e7ff;border-radius:4px"></div>
<svg style="left:806.30px;top:629.53px" width="8" height="8" viewBox="0 0 8 8"><path d="M3.01 1.27L3.04 -0.14L4.96 -0.14L4.99 1.27L5.86 1.78L7.11 1.10L8.06 2.76L6.86 3.50L6.86 4.50L8.06 5.24L7.11 6.90L5.86 6.22L4.99 6.73L4.96 8.14L3.04 8.14L3.01 6.73L2.14 6.22L0.89 6.90L-0.06 5.24L1.14 4.50L1.14 3.50L-0.06 2.76L0.89 1.10L2.14 1.78Z" fill="#0f172a"/><circle cx="4" cy="4" r="2.95" fill="#0f172a"/><circle cx="4" cy="4" r="1.45" fill="#e0e7ff"/></svg>
<div class="a" style="left:455.00px;top:649.36px;width:805.00px;height:30.83px;background:#fefbe8"></div>
<div class="a" style="left:460.60px;top:659.06px;width:11.40px;height:11.40px;background:#4f46e5;border-radius:2.5px"></div>
<div class="a" style="left:464.30px;top:662.76px;width:4.00px;height:4.00px;background:#fff;border-radius:50%"></div>
<div class="t" style="left:483.00px;top:659.06px;font-size:11.6px;color:#111827;-webkit-text-stroke:0.35px #111827;letter-spacing:-0.278px;">Release Run 1.0 (17)</div>
<div class="a" style="left:594.00px;top:654.86px;width:24.00px;height:19.00px;background:#e0e7ff;border-radius:4px"></div>
<svg style="left:602.00px;top:660.36px" width="8" height="8" viewBox="0 0 8 8"><path d="M3.01 1.27L3.04 -0.14L4.96 -0.14L4.99 1.27L5.86 1.78L7.11 1.10L8.06 2.76L6.86 3.50L6.86 4.50L8.06 5.24L7.11 6.90L5.86 6.22L4.99 6.73L4.96 8.14L3.04 8.14L3.01 6.73L2.14 6.22L0.89 6.90L-0.06 5.24L1.14 4.50L1.14 3.50L-0.06 2.76L0.89 1.10L2.14 1.78Z" fill="#0f172a"/><circle cx="4" cy="4" r="2.95" fill="#0f172a"/><circle cx="4" cy="4" r="1.45" fill="#e0e7ff"/></svg>
<div class="a" style="left:460.40px;top:689.89px;width:11.40px;height:11.40px;border:1px solid #e5e7eb;border-radius:2.5px;background:#fff"></div>
<div class="t" style="left:483.00px;top:689.55px;font-size:12px;color:#111827;-webkit-text-stroke:0.35px #111827;letter-spacing:0.094px;">Generated e891c41f-8039-4e64-aa24-e0d56e749c9c (10)</div>
<div class="a" style="left:803.30px;top:685.69px;width:24.00px;height:19.00px;background:#e0e7ff;border-radius:4px"></div>
<svg style="left:811.30px;top:691.19px" width="8" height="8" viewBox="0 0 8 8"><path d="M3.01 1.27L3.04 -0.14L4.96 -0.14L4.99 1.27L5.86 1.78L7.11 1.10L8.06 2.76L6.86 3.50L6.86 4.50L8.06 5.24L7.11 6.90L5.86 6.22L4.99 6.73L4.96 8.14L3.04 8.14L3.01 6.73L2.14 6.22L0.89 6.90L-0.06 5.24L1.14 4.50L1.14 3.50L-0.06 2.76L0.89 1.10L2.14 1.78Z" fill="#0f172a"/><circle cx="4" cy="4" r="2.95" fill="#0f172a"/><circle cx="4" cy="4" r="1.45" fill="#e0e7ff"/></svg>
<div class="a" style="left:455.00px;top:647.70px;width:198.00px;height:32.90px;border:2px solid #e8283a;border-radius:1px"></div>
<svg style="left:1272px;top:715px" width="8" height="5" viewBox="1272 715 8 5"><path d="M1273.5 720L1280 717.2V720Z" fill="#111" style="filter:blur(0.4px)"/></svg>
<div class="a" style="left:0.00px;top:0.00px;width:52.00px;height:720.00px;background:#3730a3"></div>
<svg style="left:0;top:0" width="52" height="720" viewBox="0 0 52 720"><g stroke="#fff" stroke-width="2.6" stroke-linecap="round"><path d="M16.6 23.2H30.9M16.6 29.8H30.9M16.6 36.3H30.9"/></g><path d="M16.8 74.3L21.2 78.8L30.6 69.2" fill="none" stroke="#a5b4fc" stroke-width="3" stroke-linecap="round" stroke-linejoin="round"/><circle cx="23.3" cy="112.9" r="8" fill="none" stroke="#fff" stroke-width="1.9"/><path d="M21.2 109.2V116.6L27 112.9Z" fill="#fff"/><g fill="none" stroke="#a5b4fc" stroke-width="1.6" stroke-linecap="round" stroke-linejoin="round"><path d="M15.6 146.8H26.5M15.6 150.6H26.5M15.6 154.4H22"/><path d="M24.2 155.2L26.6 157.5L32.2 152"/></g><path d="M15.8 196.2H19.6V192.6H23.2V189H26.8V185.3H31.8" fill="none" stroke="#a5b4fc" stroke-width="2.4" stroke-linecap="square"/><path d="M16 229.8H19.8L21.8 225.2L24.8 233.8L26.8 229.8H30.8" fill="none" stroke="#a5b4fc" stroke-width="1.6" stroke-linecap="round" stroke-linejoin="round"/><g fill="none" stroke="#a5b4fc" stroke-width="1.9" stroke-linecap="round" stroke-linejoin="round"><path d="M14.6 263.2V260.6Q14.6 259.8 15.4 259.8H31.2Q32 259.8 32 260.6V274.2Q32 275 31.2 275H15.4Q14.6 275 14.6 274.2V271.6"/><path d="M14.2 267.4H24.2M21.4 264.4L24.4 267.4L21.4 270.4"/></g><g fill="none" stroke="#a5b4fc" stroke-width="1.8" stroke-linecap="round"><rect x="16.7" y="299.9" width="13.6" height="13.4" rx="1"/><path d="M20.2 310V305.6M23.5 310V302.8M26.8 310V307.2"/></g><g fill="none" stroke="#a5b4fc" stroke-width="1.6" stroke-linecap="round"><circle cx="17.6" cy="338.2" r="1.8"/><circle cx="29.3" cy="338.2" r="1.8"/><circle cx="23.4" cy="351.6" r="1.8"/><path d="M18.5 339.8L23.4 346.8L28.4 339.8M23.4 346.8V349.8"/></g><path d="M30.05 382.39L32.56 382.62L32.56 385.78L30.05 386.01L29.42 387.55L31.03 389.49L28.79 391.73L26.85 390.12L25.31 390.75L25.08 393.26L21.92 393.26L21.69 390.75L20.15 390.12L18.21 391.73L15.97 389.49L17.58 387.55L16.95 386.01L14.44 385.78L14.44 382.62L16.95 382.39L17.58 380.85L15.97 378.91L18.21 376.67L20.15 378.28L21.69 377.65L21.92 375.14L25.08 375.14L25.31 377.65L26.85 378.28L28.79 376.67L31.03 378.91L29.42 380.85Z" fill="#a5b4fc"/><circle cx="23.5" cy="384.2" r="7" fill="#a5b4fc"/><circle cx="23.5" cy="384.2" r="2.9" fill="#3730a3"/><circle cx="23.3" cy="611.2" r="8.2" fill="none" stroke="#a5b4fc" stroke-width="1.6"/><path d="M20.8 609.2Q20.8 606.6 23.3 606.6Q25.8 606.6 25.8 608.8Q25.8 610.3 23.3 611.2V612.4" fill="none" stroke="#a5b4fc" stroke-width="1.6" stroke-linecap="round"/><circle cx="23.3" cy="615.2" r="1" fill="#a5b4fc"/><path d="M17.5 644Q17.5 642.7 18.8 642.7H22.6L24.4 644.6H32.3Q33.6 644.6 33.6 645.9V654.8Q33.6 656 32.3 656H18.8Q17.5 656 17.5 654.8Z" fill="#a5b4fc"/><path d="M14.3 647.2V657.8Q14.3 659 15.5 659H29.8" fill="none" stroke="#a5b4fc" stroke-width="1.6" stroke-linecap="round"/><circle cx="24.3" cy="688.8" r="10.8" fill="#fff" stroke="#111" stroke-width="1.1"/><path d="M17.5 682.5H27.5V686H24.3V696H20.6V686H17.5Z" fill="#111"/><rect x="28.3" y="682.5" width="1.2" height="5.5" fill="#60a5fa"/><rect x="27.5" y="682.5" width="0.8" height="3.5" fill="#111"/></svg>
</body></html>
